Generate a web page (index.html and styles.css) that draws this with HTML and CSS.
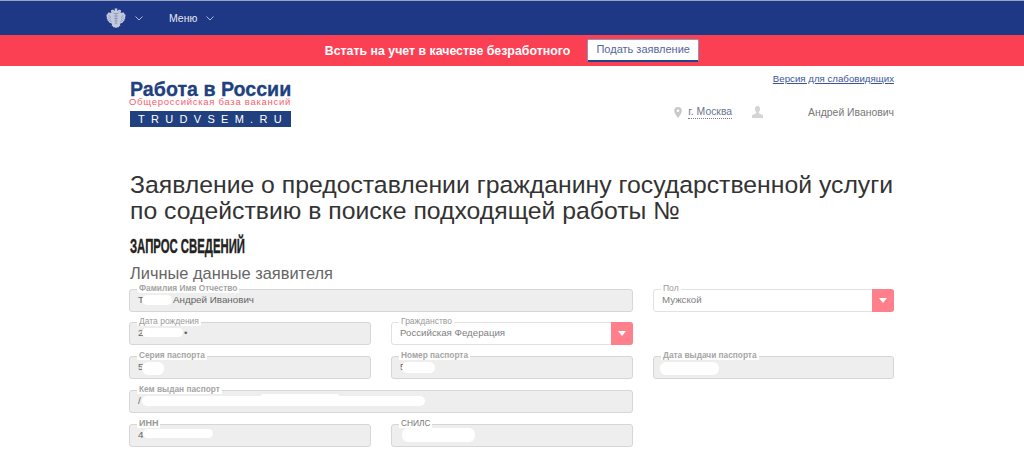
FILE: index.html
```html
<!DOCTYPE html>
<html lang="ru">
<head>
<meta charset="utf-8">
<title>Работа в России</title>
<link rel="stylesheet" href="styles.css">
</head>
<body>
<nav class="topbar">
  <svg class="emblem" viewBox="0 0 20 20" width="20" height="20" aria-hidden="true">
    <g class="emblem-fill">
      <path d="M10.200 .5L8.600 .5L9 3L8 2.200C7 1.400 5.400 1.600 5 2.800C4.800 3.600 5.100 4.200 5.600 4.600L4 5L3 4.200L1.900 4.900L1.500 6.200L.6 6.500L.4 8.300L1 9L.7 10.700L1.600 11.600L1.700 13L2.900 13.500L3.400 14.800L5.200 15.200L6.100 16.300L5.600 17.700L6.900 18.300L7.200 19.300L8.500 19.300L10.200 20Z"/>
      <path d="M9.800 .5L11.400 .5L11 3L12 2.200C13 1.400 14.600 1.600 15 2.800C15.200 3.600 14.900 4.200 14.400 4.600L16 5L17 4.200L18.100 4.900L18.500 6.200L19.400 6.500L19.600 8.300L19 9L19.300 10.700L18.400 11.600L18.300 13L17.100 13.500L16.600 14.800L14.800 15.200L13.900 16.300L14.400 17.700L13.100 18.300L12.800 19.300L11.500 19.300L9.800 20Z"/>
    </g>
    <path class="emblem-line" d="M2.600 7l2.400 3M2 9.600l2.800 2.400M3.400 12.400l2.400 1.400M17.400 7L15 10M18 9.600L15.200 12M16.600 12.400l-2.400 1.400M7.500 5.500h5M7.800 8h4.400M8 10.500h4M8.400 13h3.200M10 5.500v9M6.500 3.400l.8.8M13.500 3.400l-.8.8M8.500 16l1.500-1 1.500 1"/>
  </svg>
  <svg class="chevron chevron-first" viewBox="0 0 8 5" width="8" height="5" aria-hidden="true"><path d="M.5.5L4 4 7.500.5"/></svg>
  <span class="menu">Меню</span>
  <svg class="chevron" viewBox="0 0 8 5" width="8" height="5" aria-hidden="true"><path d="M.5.5L4 4 7.500.5"/></svg>
</nav>
<div class="promo">
  <strong class="promo-text">Встать на учет в качестве безработного</strong>
  <a class="promo-btn" href="#">Подать заявление</a>
</div>
<main class="page">
  <header class="head">
    <div class="logo">
      <div class="logo-title">Работа в России</div>
      <div class="logo-sub">Общероссийская база вакансий</div>
      <div class="logo-bar">TRUDVSEM.RU</div>
    </div>
    <div class="head-right">
      <a class="a11y" href="#">Версия для слабовидящих</a>
      <div class="user-row">
        <svg class="pin" viewBox="0 0 8 11" width="8" height="11" aria-hidden="true"><path fill-rule="evenodd" d="M4 0a3.800 3.800 0 0 1 3.800 3.800C7.800 6.500 4 11 4 11S.2 6.500.2 3.800A3.800 3.800 0 0 1 4 0zm0 2.500a1.300 1.300 0 1 0 0 2.600 1.300 1.300 0 0 0 0-2.600z"/></svg>
        <span class="city">г. Москва</span>
        <svg class="person" viewBox="0 0 11 12" width="11" height="12" aria-hidden="true"><path d="M5.500 0c1.700 0 2.600 1.200 2.600 3 0 1.300-.6 2.500-1.300 3v1.300l4.200 2V12H0V9.300l4.200-2V6c-.7-.5-1.300-1.700-1.300-3 0-1.800.9-3 2.600-3z"/></svg>
        <span class="user">Андрей Иванович</span>
      </div>
    </div>
  </header>

  <h1 class="title">Заявление о предоставлении гражданину государственной услуги<br>по содействию в поиске подходящей работы №</h1>
  <h2 class="section">Запрос сведений</h2>
  <h3 class="sub">Личные данные заявителя</h3>

  <form class="form">
    <div class="field wide disabled">
      <label class="label strong">Фамилия Имя Отчество</label>
      <span class="value"><i class="mask mask-name"></i>Т<span class="after-mask">Андрей Иванович</span></span>
    </div>
    <div class="field">
      <label class="label">Пол</label>
      <span class="value muted">Мужской</span>
      <span class="arrow"></span>
    </div>

    <div class="field disabled">
      <label class="label">Дата рождения</label>
      <span class="value"><i class="mask mask-date"></i>2<span class="after-mask after-date">•</span></span>
    </div>
    <div class="field">
      <label class="label">Гражданство</label>
      <span class="value muted">Российская Федерация</span>
      <span class="arrow"></span>
    </div>
    <div class="spacer"></div>

    <div class="field disabled">
      <label class="label strong">Серия паспорта</label>
      <span class="value"><i class="mask mask-series"></i>5</span>
    </div>
    <div class="field disabled">
      <label class="label strong">Номер паспорта</label>
      <span class="value"><i class="mask mask-number"></i>5</span>
    </div>
    <div class="field disabled">
      <label class="label strong">Дата выдачи паспорта</label>
      <span class="value"><i class="mask mask-issued"></i></span>
    </div>

    <div class="field wide disabled">
      <label class="label strong">Кем выдан паспорт</label>
      <span class="value"><i class="mask mask-org"></i><i class="mask mask-org-top"></i>/</span>
    </div>
    <div class="spacer"></div>

    <div class="field disabled">
      <label class="label strong big">ИНН</label>
      <span class="value"><i class="mask mask-inn"></i>4</span>
    </div>
    <div class="field disabled">
      <label class="label big snils">СНИЛС</label>
      <span class="value"><i class="mask mask-snils"></i></span>
    </div>
  </form>
</main>
</body>
</html>
```

FILE: styles.css
```css
* { box-sizing: border-box; }
html, body { margin: 0; padding: 0; height: 461px; overflow: hidden; background: #fff; }
body { font-family: "Liberation Sans", Arial, sans-serif; color: #333; }

.topbar {
  height: 35px;
  background: #1f3886;
  border-top: 1px solid #9aa3bd;
  display: flex;
  align-items: center;
  padding-left: 106px;
}
.emblem { margin-right: 9px; }
.emblem-fill { fill: #c3cadd; }
.emblem-line { fill: none; stroke: #7483ad; stroke-width: .6; }
.chevron { fill: none; stroke: #aeb8d4; stroke-width: 1; }
.chevron-first { margin-right: 26px; }
.menu { color: #e3e7f1; font-size: 10.500px; margin-right: 9px; }

.promo {
  height: 31px;
  background: #fc4053;
  display: flex;
  align-items: center;
  justify-content: center;
  gap: 17px;
}
.promo-text { color: #fff; font-size: 12.350px; font-weight: 700; }
.promo-btn {
  width: 112px;
  height: 23px;
  background: #fff;
  border: 1px solid #8b97bd;
  border-bottom: 2px solid #24418f;
  border-radius: 2px;
  color: #55669c;
  font-size: 11px;
  text-align: center;
  line-height: 19px;
  text-decoration: none;
}

.page { width: 766px; margin: 0 0 0 129px; }

.head { display: flex; justify-content: space-between; height: 106px; }
.logo { width: 162px; margin-top: 14px; padding-left: 1px; }
.logo-title {
  color: #21407f;
  font-size: 21px;
  font-weight: 700;
  line-height: 18px;
  white-space: nowrap;
  transform: scaleX(.935);
  transform-origin: left center;
  -webkit-text-stroke: .3px #21407f;
}
.logo-sub { color: #f6606f; font-size: 9.500px; line-height: 8px; letter-spacing: .72px; margin-left: -1px; white-space: nowrap; }
.logo-bar {
  margin-top: 5px;
  height: 16px;
  padding-left: 8px;
  background: #21407f;
  color: #fff;
  font-size: 11px;
  letter-spacing: 6.300px;
  line-height: 16px;
  white-space: nowrap;
}

.head-right { display: flex; flex-direction: column; align-items: flex-end; padding-right: 1px; margin-top: 7px; }
.a11y { color: #3c5596; font-size: 9.700px; line-height: 12px; text-decoration: underline; }
.user-row { display: flex; align-items: center; margin-top: 20px; color: #777; font-size: 10.400px; height: 14px; }
.pin { fill: #c9c9c9; margin-right: 6px; }
.city { border-bottom: 1px dotted #778; line-height: 13px; margin-right: 20px; color: #6a7690; }
.person { fill: #d4d4d4; margin-right: 45px; }
.user { color: #777; }

.title { margin: 0; padding-left: 1px; font-size: 24.770px; font-weight: 400; line-height: 26px; color: #333; white-space: nowrap; }
.section {
  margin: 12px 0 0 1px;
  font-size: 21px;
  line-height: 20px;
  font-weight: 700;
  text-transform: uppercase;
  color: #222;
  white-space: nowrap;
  transform: scaleX(.54);
  transform-origin: left center;
  -webkit-text-stroke: .4px #222;
}
.sub { margin: 8px 0 0 1px; font-size: 16.400px; font-weight: 400; line-height: 18px; color: #666; }

.form {
  display: grid;
  grid-template-columns: 242px 242px 241px;
  grid-template-rows: 33px 34px 34px 34px 23px;
  column-gap: 20px;
  margin-top: 7px;
}
.wide { grid-column: span 2; }
.field {
  position: relative;
  height: 23px;
  background: #fff;
  border: 1px solid #e1e1e1;
  border-radius: 3px;
}
.disabled { background: #eee; border-color: #d6d6d6; }
.label {
  position: absolute;
  left: 7px;
  top: -6px;
  padding: 0 2px;
  background: #fff;
  color: #9a9a9a;
  font-size: 8.500px;
  line-height: 9px;
  white-space: nowrap;
}
.strong { font-weight: 700; font-size: 8.300px; color: #a5a5a5; }
.big { font-size: 9px; color: #999; }
.snils { font-size: 8.300px; color: #777; }
.value {
  display: block;
  position: relative;
  padding: 4px 0 0 8px;
  font-size: 9.800px;
  line-height: 12px;
  color: #666;
  white-space: nowrap;
}
.muted { color: #808080; font-size: 9.700px; }
.after-mask { position: absolute; left: 43px; top: 4px; }
.after-date { left: 54px; }
.mask { position: absolute; background: #fff; border-radius: 6px; display: block; }
.mask-name { left: 12px; top: 5px; width: 30px; height: 10px; }
.mask-date { left: 12px; top: 5px; width: 41px; height: 9px; }
.mask-series { left: 12px; top: 5px; width: 22px; height: 13px; }
.mask-number { left: 10px; top: 5px; width: 33px; height: 11px; }
.mask-issued { left: 6px; top: 5px; width: 59px; height: 13px; }
.mask-org { left: 12px; top: 5px; width: 283px; height: 10px; }
.mask-org-top { left: 130px; top: 3px; width: 80px; height: 8px; }
.mask-inn { left: 13px; top: 4px; width: 70px; height: 9px; }
.mask-snils { left: 10px; top: 3px; width: 73px; height: 14px; }
.arrow {
  position: absolute;
  right: -1px;
  top: -1px;
  width: 22px;
  height: 23px;
  background: #ff7f8b;
  border-radius: 0 3px 3px 0;
}
.arrow::after {
  content: "";
  position: absolute;
  left: 7px;
  top: 9px;
  border-left: 4.500px solid transparent;
  border-right: 4.500px solid transparent;
  border-top: 5px solid #fff;
}
```
